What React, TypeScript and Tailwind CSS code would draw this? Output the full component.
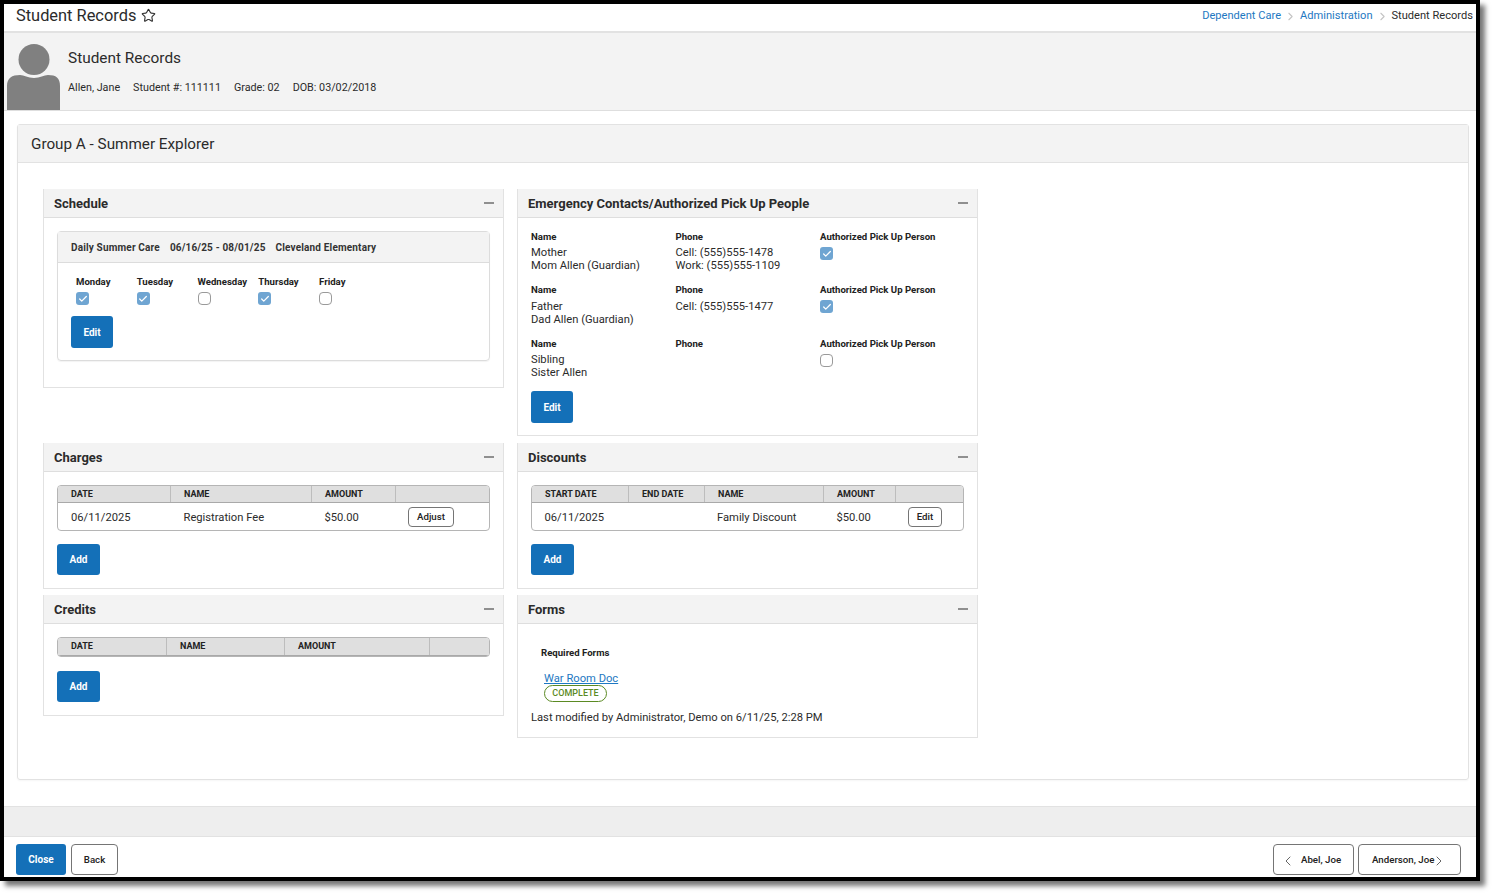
import { Check, ChevronLeft, ChevronRight, Star } from 'lucide-react'
import type { ReactNode } from 'react'

const labelText = 'text-[9.6px] leading-[13px] font-bold text-[#222]'

function Panel({ title, className, children }: { title: string; className: string; children: ReactNode }) {
  return (
    <section className={`border border-t-0 border-[#e2e2e2] bg-white ${className}`}>
      <div className="flex h-[29px] items-center justify-between border-b border-[#dedede] bg-[#f3f3f3] pl-[10px] pr-[9px] pt-[1px]">
        <h2 className="text-[13px] font-bold text-[#2b2b2b]">{title}</h2>
        <span className="mb-[1px] block h-[2px] w-[10px] bg-[#8f8f8f]" />
      </div>
      {children}
    </section>
  )
}

function Checkbox({ checked }: { checked?: boolean }) {
  if (checked) {
    return (
      <span className="flex h-[13px] w-[13px] items-center justify-center rounded-[3px] bg-[#6fa5d2]">
        <Check className="h-[10px] w-[10px] text-white" strokeWidth={3} />
      </span>
    )
  }
  return <span className="block h-[13px] w-[13px] rounded-[4px] border border-[#9a9a9a] bg-white" />
}

function PrimaryButton({ label, className }: { label: string; className: string }) {
  return (
    <button className={`flex items-center justify-center rounded-[3px] bg-[#1470b8] text-[10px] font-bold text-white ${className}`}>
      {label}
    </button>
  )
}

function OutlineButton({ children, className }: { children: ReactNode; className: string }) {
  return (
    <button className={`flex items-center rounded-[4px] border border-[#757575] bg-white pt-[2px] text-[9.7px] font-medium text-[#222] ${className}`}>
      {children}
    </button>
  )
}

function HeaderRow({ columns, className }: { columns: { label: string; width: string }[]; className: string }) {
  return (
    <div className={`flex border-b border-[#a9a9a9] bg-[#dfdfdf] ${className}`}>
      {columns.map((col, i) => (
        <div
          key={i}
          className={`flex items-center border-[#bdbdbd] pl-[13px] text-[9px] font-bold text-[#222] ${col.width} ${i < columns.length - 1 ? 'border-r' : ''}`}
        >
          {col.label}
        </div>
      ))}
    </div>
  )
}

const days = [
  { name: 'Monday', checked: true },
  { name: 'Tuesday', checked: true },
  { name: 'Wednesday', checked: false },
  { name: 'Thursday', checked: true },
  { name: 'Friday', checked: false },
]

const contacts = [
  { role: 'Mother', person: 'Mom Allen (Guardian)', phones: ['Cell: (555)555-1478', 'Work: (555)555-1109'], authorized: true },
  { role: 'Father', person: 'Dad Allen (Guardian)', phones: ['Cell: (555)555-1477'], authorized: true },
  { role: 'Sibling', person: 'Sister Allen', phones: [], authorized: false },
]

export default function App() {
  return (
    <div className="h-[896px] w-[1495px] bg-white font-['Roboto',sans-serif] text-[#2b2b2b]">
      <div className="flex h-[881px] w-[1480px] flex-col border-4 border-black bg-white shadow-[5px_5px_5px_#777]">
        {/* top bar */}
        <header className="flex h-[29px] shrink-0 items-center justify-between border-b-2 border-[#e2e2e2] pb-[2px] pl-[12px] pr-[3px]">
          <div className="flex items-center gap-[5px]">
            <h1 className="text-[16.4px] text-[#2b2b2b]">Student Records</h1>
            <Star className="-mt-[1px] h-[15px] w-[15px] text-[#333]" strokeWidth={1.8} />
          </div>
          <nav className="flex items-center text-[11.1px]">
            <span className="text-[#1e78c2]">Dependent Care</span>
            <ChevronRight className="mx-[3px] h-[13px] w-[13px] text-[#c4c4c4]" />
            <span className="text-[#1e78c2]">Administration</span>
            <ChevronRight className="mx-[3px] h-[13px] w-[13px] text-[#c4c4c4]" />
            <span className="text-[#2b2b2b]">Student Records</span>
          </nav>
        </header>

        {/* student banner */}
        <div className="flex h-[78px] shrink-0 border-b border-[#dedede] bg-[#f3f3f3]">
          <svg className="mt-[11px] ml-[3px] h-[66px] w-[53px] shrink-0" viewBox="0 0 53 66">
            <circle cx="27" cy="15.5" r="15.5" fill="#808080" />
            <path d="M0 66V42C0 34 5 31 13 31c4 0 8 3 14 3s10-3 14-3c8 0 12 3 12 11v24z" fill="#808080" />
          </svg>
          <div className="ml-[8px] flex flex-col">
            <div className="mt-[14px] text-[15.4px] leading-[22px]">Student Records</div>
            <div className="mt-[12px] flex gap-[13px] text-[10.75px] leading-[14px]">
              <span>Allen, Jane</span>
              <span>Student #: 111111</span>
              <span>Grade: 02</span>
              <span>DOB: 03/02/2018</span>
            </div>
          </div>
        </div>

        {/* main */}
        <main className="min-h-0 flex-1 pl-[13px] pr-[7px] pt-[13px]">
          <div className="h-[656px] rounded-[3px] border border-[#e2e2e2] shadow-[0_1px_2px_rgba(0,0,0,0.04)]">
            <div className="flex h-[38px] items-center border-b border-[#e2e2e2] bg-[#f3f3f3] pl-[13px] pt-[1px] text-[15.25px]">
              Group A - Summer Explorer
            </div>
            <div className="grid w-[935px] grid-cols-[461px_461px] gap-x-[13px] pl-[25px] pt-[26px]">
              <Panel title="Schedule" className="h-[199px] self-start">
                <div className="mx-[13px] mt-[13px] rounded-[4px] border border-[#dcdcdc] shadow-[0_1px_1px_rgba(0,0,0,0.05)]">
                  <div className="flex h-[31px] items-center gap-[10px] border-b border-[#dcdcdc] bg-[#f3f3f3] pl-[13px] text-[10px] font-bold tracking-[0.16px] text-[#333]">
                    <span>Daily Summer Care</span>
                    <span>06/16/25 - 08/01/25</span>
                    <span>Cleveland Elementary</span>
                  </div>
                  <div className="pl-[13px] pt-[12px] pb-[12px]">
                    <div className="flex pl-[5px]">
                      {days.map((d) => (
                        <div key={d.name} className="w-[60.75px]">
                          <div className={labelText}>{d.name}</div>
                          <div className="mt-[4px]">
                            <Checkbox checked={d.checked} />
                          </div>
                        </div>
                      ))}
                    </div>
                    <PrimaryButton label="Edit" className="mt-[11px] h-[32px] w-[42px]" />
                  </div>
                </div>
              </Panel>

              <Panel title="Emergency Contacts/Authorized Pick Up People" className="row-span-1 mb-[7px] h-[247px]">
                <div className="px-[13px] pt-[12px]">
                  {contacts.map((c, i) => (
                    <div key={c.role} className={`grid grid-cols-[144.5px_144.5px_1fr] ${i === 0 ? 'h-[53px]' : 'h-[54px]'}`}>
                      <div>
                        <div className={labelText}>Name</div>
                        <div className={`text-[11.2px] leading-[13px] ${i === 1 ? 'mt-[4px]' : 'mt-[3px]'}`}>
                          {c.role}
                          <br />
                          {c.person}
                        </div>
                      </div>
                      <div>
                        <div className={labelText}>Phone</div>
                        <div className={`text-[11.2px] leading-[13px] ${i === 1 ? 'mt-[4px]' : 'mt-[3px]'}`}>
                          {c.phones.map((p) => (
                            <div key={p}>{p}</div>
                          ))}
                        </div>
                      </div>
                      <div>
                        <div className={labelText}>Authorized Pick Up Person</div>
                        <div className="mt-[4px]">
                          <Checkbox checked={c.authorized} />
                        </div>
                      </div>
                    </div>
                  ))}
                  <PrimaryButton label="Edit" className="h-[32px] w-[42px]" />
                </div>
              </Panel>

              <Panel title="Charges" className="mb-[6px] h-[146px]">
                <div className="mx-[13px] mt-[13px] overflow-hidden rounded-[4px] border border-[#b5b5b5]">
                  <HeaderRow
                    className="h-[17px] [&>div]:pt-[2px]"
                    columns={[
                      { label: 'DATE', width: 'w-[113px]' },
                      { label: 'NAME', width: 'w-[141px]' },
                      { label: 'AMOUNT', width: 'w-[84px]' },
                      { label: '', width: 'flex-1' },
                    ]}
                  />
                  <div className="flex h-[27px] items-center text-[11.2px]">
                    <span className="w-[113px] pl-[13px] pt-[3px]">06/11/2025</span>
                    <span className="w-[141px] pl-[12.5px] pt-[3px]">Registration Fee</span>
                    <span className="w-[84px] pl-[12.5px] pt-[3px]">$50.00</span>
                    <OutlineButton className="ml-[12px] h-[20px] w-[46px] justify-center">Adjust</OutlineButton>
                  </div>
                </div>
                <PrimaryButton label="Add" className="mt-[13px] ml-[13px] h-[31px] w-[43px]" />
              </Panel>

              <Panel title="Discounts" className="mb-[6px] h-[146px]">
                <div className="mx-[13px] mt-[13px] overflow-hidden rounded-[4px] border border-[#b5b5b5]">
                  <HeaderRow
                    className="h-[17px] [&>div]:pt-[2px]"
                    columns={[
                      { label: 'START DATE', width: 'w-[97px]' },
                      { label: 'END DATE', width: 'w-[76px]' },
                      { label: 'NAME', width: 'w-[119px]' },
                      { label: 'AMOUNT', width: 'w-[72px]' },
                      { label: '', width: 'flex-1' },
                    ]}
                  />
                  <div className="flex h-[27px] items-center text-[11.2px]">
                    <span className="w-[97px] pl-[12.5px] pt-[3px]">06/11/2025</span>
                    <span className="w-[76px]" />
                    <span className="w-[119px] pl-[12px] pt-[3px]">Family Discount</span>
                    <span className="w-[72px] pl-[12.5px] pt-[3px]">$50.00</span>
                    <OutlineButton className="ml-[12px] h-[20px] w-[34px] justify-center">Edit</OutlineButton>
                  </div>
                </div>
                <PrimaryButton label="Add" className="mt-[13px] ml-[13px] h-[31px] w-[43px]" />
              </Panel>

              <Panel title="Credits" className="h-[121px] self-start">
                <div className="mx-[13px] mt-[13px] overflow-hidden rounded-[4px] border border-[#b5b5b5]">
                  <HeaderRow
                    className="h-[18px]"
                    columns={[
                      { label: 'DATE', width: 'w-[109px]' },
                      { label: 'NAME', width: 'w-[118px]' },
                      { label: 'AMOUNT', width: 'w-[145px]' },
                      { label: '', width: 'flex-1' },
                    ]}
                  />
                </div>
                <PrimaryButton label="Add" className="mt-[14px] ml-[13px] h-[31px] w-[43px]" />
              </Panel>

              <Panel title="Forms" className="h-[143px] self-start">
                <div className="pl-[13px] pt-[22px]">
                  <div className="pl-[10px] text-[9.6px] leading-[13px] font-bold text-[#222]">Required Forms</div>
                  <a className="mt-[13px] ml-[13px] block w-fit text-[11.2px] leading-[13px] text-[#1e78c2] underline">War Room Doc</a>
                  <span className="ml-[13px] flex h-[17px] w-[63px] items-center justify-center rounded-full border border-[#5b8a23] text-[9px] font-medium text-[#5b8a23]">
                    COMPLETE
                  </span>
                  <p className="mt-[9px] text-[11.2px] leading-[14px]">Last modified by Administrator, Demo on 6/11/25, 2:28 PM</p>
                </div>
              </Panel>
            </div>
          </div>
        </main>

        {/* footer */}
        <div className="h-[30px] shrink-0 border-t border-[#e2e2e2] bg-[#eeeeee]" />
        <footer className="flex h-[41px] shrink-0 items-start justify-between border-t border-[#e2e2e2] pl-[12px] pr-[15px] pt-[7px]">
          <div className="flex gap-[5px]">
            <PrimaryButton label="Close" className="h-[31px] w-[50px]" />
            <OutlineButton className="h-[31px] w-[47px] justify-center">Back</OutlineButton>
          </div>
          <div className="flex gap-[4px]">
            <OutlineButton className="h-[31px] w-[81px] gap-[5px] pl-[6px]">
              <ChevronLeft className="h-[16px] w-[16px] text-[#666]" strokeWidth={1.5} />
              Abel, Joe
            </OutlineButton>
            <OutlineButton className="h-[31px] w-[103px] pl-[13px]">
              Anderson, Joe
              <ChevronRight className="-ml-[3px] h-[16px] w-[16px] text-[#666]" strokeWidth={1.5} />
            </OutlineButton>
          </div>
        </footer>
      </div>
    </div>
  )
}
